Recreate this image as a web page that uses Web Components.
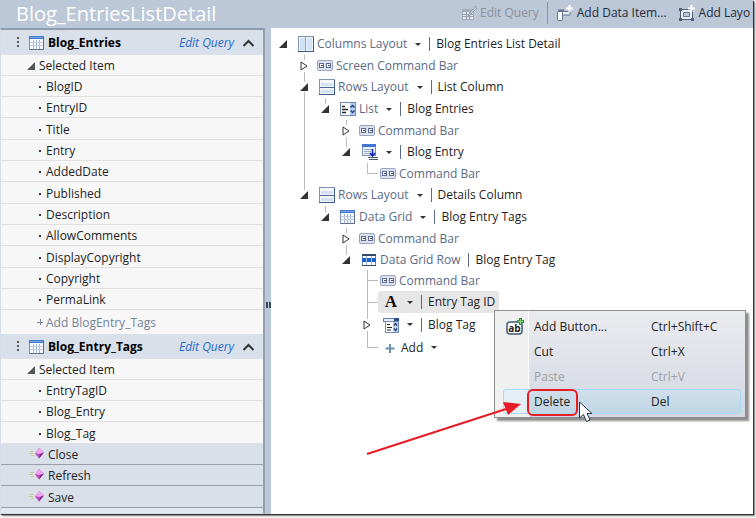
<!DOCTYPE html>
<html lang="en">
<head>
<meta charset="utf-8">
<title>Blog_EntriesListDetail</title>
<style>
  body {
    margin: 0;
    font: 12px/20px "Open Sans", "Noto Sans", sans-serif;
    color: #1e1e1e;
    background: white;
  }
</style>
</head>
<body>
<screen-designer heading="Blog_EntriesListDetail">
  <tool-button slot="tools" icon="editQuery" disabled>Edit Query</tool-button>
  <tool-button slot="tools" icon="addData" divided>Add Data Item...</tool-button>
  <tool-button slot="tools" icon="addLayout">Add Layo</tool-button>

  <data-panel slot="members">
    <query-group name="Blog_Entries" add="Add BlogEntry_Tags">
      <field-row>BlogID</field-row>
      <field-row>EntryID</field-row>
      <field-row>Title</field-row>
      <field-row>Entry</field-row>
      <field-row>AddedDate</field-row>
      <field-row>Published</field-row>
      <field-row>Description</field-row>
      <field-row>AllowComments</field-row>
      <field-row>DisplayCopyright</field-row>
      <field-row>Copyright</field-row>
      <field-row>PermaLink</field-row>
    </query-group>
    <query-group name="Blog_Entry_Tags">
      <field-row>EntryTagID</field-row>
      <field-row>Blog_Entry</field-row>
      <field-row>Blog_Tag</field-row>
    </query-group>
    <method-row>Close</method-row>
    <method-row>Refresh</method-row>
    <method-row>Save</method-row>
  </data-panel>

  <tree-item icon="columns" kind="Columns Layout" menu name="Blog Entries List Detail" state="open" root>
    <tree-item icon="commands" kind="Screen Command Bar" state="closed"></tree-item>
    <tree-item icon="rows" kind="Rows Layout" menu name="List Column" state="open">
      <tree-item icon="list" kind="List" menu name="Blog Entries" state="open">
        <tree-item icon="commands" kind="Command Bar" state="closed"></tree-item>
        <tree-item icon="summary" menu name="Blog Entry" state="open">
          <tree-item icon="commands" kind="Command Bar"></tree-item>
        </tree-item>
      </tree-item>
    </tree-item>
    <tree-item icon="rows" kind="Rows Layout" menu name="Details Column" state="open">
      <tree-item icon="grid" kind="Data Grid" menu name="Blog Entry Tags" state="open">
        <tree-item icon="commands" kind="Command Bar" state="closed"></tree-item>
        <tree-item icon="gridRow" kind="Data Grid Row" name="Blog Entry Tag" state="open">
          <tree-item icon="commands" kind="Command Bar"></tree-item>
          <tree-item icon="label" menu name="Entry Tag ID" selected></tree-item>
          <tree-item icon="picker" menu name="Blog Tag" state="closed"></tree-item>
          <tree-item icon="plus" kind="Add" menu add></tree-item>
        </tree-item>
      </tree-item>
    </tree-item>
  </tree-item>

  <context-menu slot="popup">
    <menu-entry icon="addButton" keys="Ctrl+Shift+C">Add Button...</menu-entry>
    <menu-entry keys="Ctrl+X">Cut</menu-entry>
    <menu-entry keys="Ctrl+V" disabled>Paste</menu-entry>
    <menu-entry keys="Del" active>Delete</menu-entry>
  </context-menu>
  <callout-arrow slot="popup"></callout-arrow>
</screen-designer>

<script>
const svg = (body, w = 16, h = 16) =>
  `<svg width="${w}" height="${h}" viewBox="0 0 ${w} ${h}" fill="none" aria-hidden="true">${body}</svg>`;

const tableIcon = svg(`
  <rect x=".5" y="1.5" width="14" height="13" fill="#f4f8fd" stroke="#8295b5"/>
  <path d="M0 1h15v3H0z" fill="#3f76cf"/><path d="M1 2h13v1H1z" fill="#7da6e6"/>
  <path d="M4.500 5v9M7.500 5v9M10.500 5v9" stroke="#a3b7d6"/>
  <path d="M1 7.500h13M1 10.500h13" stroke="#c0cee4"/>
  <path d="M14.500 4v10.500H1" stroke="#5d6f8f"/>`);

const icons = {
  table: tableIcon,
  grid: tableIcon,
  columns: svg(`
    <rect x=".5" y=".5" width="15" height="15" fill="#eef4fb" stroke="#7e93b5"/>
    <path d="M2 2h5v12H2zM9 2h5v12H9z" fill="#d3e3f5"/>
    <path d="M7.500 1v14" stroke="#8fa3c2"/><path d="M15.500 1v14.500H0" stroke="#3f5b87"/>`),
  rows: svg(`
    <rect x=".5" y=".5" width="15" height="15" fill="#f3f7fc" stroke="#7e93b5"/>
    <path d="M2 4h12v3H2zM2 11h12v3H2z" fill="#d3e3f5"/>
    <path d="M1 8.500h14" stroke="#4d6a97"/><path d="M15.500 1v14.500H0" stroke="#3f5b87"/>`),
  commands: svg(`
    <rect x=".5" y="2.500" width="15" height="10" rx="1.500" fill="#dde2f0" stroke="#9aa3bf"/>
    <rect x="2.500" y="5.500" width="4" height="4" fill="#fff" stroke="#5c6992"/>
    <rect x="9.500" y="5.500" width="4" height="4" fill="#fff" stroke="#5c6992"/>
    <path d="M4 7.500h2M11 7.500h2" stroke="#38456f"/>`),
  list: svg(`
    <rect x=".5" y="1.500" width="15" height="13" fill="#fff" stroke="#7189b8"/>
    <path d="M10 2h5v12h-5z" fill="#b5cdf2"/>
    <path d="M2 5.500h3M2 8.500h6M2 11.500h4" stroke="#222" stroke-width="1.500"/>
    <path d="M10.500 6.500l2-2 2 2M10.500 9.500l2 2 2-2" stroke="#24417a" stroke-width="1.500"/>`),
  summary: svg(`
    <rect x=".5" y=".5" width="13" height="11" fill="#e9f0fa" stroke="#7d92b8"/>
    <path d="M0 0h14v3H0z" fill="#3f76cf"/>
    <path d="M2 5.500h9M2 7.500h7M2 9.500h6" stroke="#9aaccc"/>
    <path d="M10.500 5v6M8 9l2.500 3L13 9" stroke="#1426b4" stroke-width="1.500"/>
    <path d="M6 13.500h10M7 15.500h9" stroke="#4d5a70"/>`),
  gridRow: svg(`
    <rect x="1.500" y="2.500" width="13" height="11" fill="#fff" stroke="#6e86b0"/>
    <path d="M1 2h14v2H1z" fill="#33496f"/>
    <path d="M1 6h14v4H1z" fill="#1f5fd0"/>
    <path d="M5.500 4v10M10.500 4v10" stroke="#9fb8e2"/>
    <path d="M1 13.500h14" stroke="#33496f"/>`),
  label: `<b id="glyph">A</b>`,
  picker: svg(`
    <rect x=".5" y="1.500" width="15" height="3" fill="#e5eefa" stroke="#5c7db5"/>
    <path d="M11 1h5v4h-5z" fill="#2b5288"/>
    <rect x="2.500" y="4.500" width="13" height="11" fill="#fff" stroke="#7189b8"/>
    <path d="M10 5h5v10h-5z" fill="#b5cdf2"/>
    <path d="M4 7.500h3M4 10.500h5M4 13h4" stroke="#222" stroke-width="1.200"/>
    <path d="M11 8.500l1.500-2 1.500 2M11 11.500l1.500 2 1.500-2" stroke="#24417a" stroke-width="1.300"/>`),
  plus: svg(`<path d="M6 4v9M1.500 8.500h9" stroke="#6d8fae" stroke-width="2"/>`),
  editQuery: svg(`
    <path d="M1 4h12v11H1z" fill="#a6adba"/>
    <path d="M2 7h10v7H2z" fill="#dfe4ec"/>
    <path d="M2 9.500h10M2 11.500h10M5.500 7v7M8.500 7v7" stroke="#9aa3b2"/>
    <path d="M15 1L8 9l-1 2 2-1 7-7z" fill="#c9d0dc" stroke="#949cab"/>`),
  addData: svg(`
    <path d="M6 7.500h8V11H7" fill="#e8eef6" stroke="#64748c"/>
    <rect x="1.500" y="7.500" width="5" height="9" rx="1" fill="#f8fafd" stroke="#64748c"/>
    <path d="M2 6.500h6" stroke="#64748c" stroke-width="2"/>
    <path d="M13.500 1v7M10 4.500h7" stroke="#fff" stroke-width="2"/>`, 18, 18),
  addLayout: svg(`
    <rect x="2.500" y="5.500" width="12" height="10" fill="#e8eef6" stroke="#4e5f7c"/>
    <path d="M5.500 8.500h6v4h-6z" fill="#b9c8dc" stroke="#64748c"/>
    <path d="M1 4h3v3H1zM13 14h3v3h-3zM1 14h3v3H1z" fill="#4e5f7c"/>
    <path d="M13.500 1v7M10 4.500h7" stroke="#fff" stroke-width="2"/>`, 18, 18),
  addButton: svg(`
    <rect x="1" y="4" width="15" height="12" rx="3" fill="#fff" stroke="#3c5878" stroke-width="1.500"/>
    <path d="M14.500 0v7M11 3.500h7" stroke="#3d9140" stroke-width="3"/>
    <path d="M14.500 1v5M12 3.500h5" stroke="#8bd07c"/>`, 18, 18),
  method: svg(`
    <path d="M1 4.500h4M0 6.500h4M2 8.500h3" stroke="#cfc98a"/>
    <path d="M10 1l5 4.500-5 6-4-5z" fill="#c04fc4"/>
    <path d="M10 1l5 4.500-4 1.500-5-1z" fill="#efa5f0"/>
    <path d="M11 7l4-1.500-5 6z" fill="#7d2a86"/>`),
};

class BaseElement extends HTMLElement {
  constructor() {
    super();
    this.attachShadow({ mode: "open" });
  }

  connectedCallback() {
    this.shadowRoot.innerHTML = `
      <style>
        * { box-sizing: border-box; }
        svg { display: block; flex: none; }
        button {
          font: inherit;
          color: inherit;
          background: none;
          border: 0;
          padding: 0;
          margin: 0;
          text-align: left;
        }
        :host { display: block; }
      </style>
      ${this.render()}
    `;
  }

  attr(name) {
    return this.getAttribute(name) || "";
  }
}

class ScreenDesigner extends BaseElement {
  render() {
    return `
      <style>
        :host {
          min-height: 100vh;
          padding: 0 3px 4px 0;
          box-sizing: border-box;
          display: grid;
          position: relative;
          overflow: hidden;
        }
        #frame {
          display: grid;
          grid-template: 28px 1fr / 265px 6px minmax(0, 1fr);
          background: #bcc7d8;
          box-shadow: 1px 1px 1px #333, 2px 2px 2px #888;
          min-width: 0;
        }
        header {
          grid-column: 1 / -1;
          display: flex;
          align-items: center;
          justify-content: space-between;
          overflow: hidden;
        }
        h1 {
          margin: 0 0 0 16px;
          font-size: 20px;
          line-height: 28px;
          font-weight: 400;
          color: white;
        }
        nav {
          display: flex;
          width: 292px;
          height: 22px;
          margin-bottom: 2px;
        }
        #splitter {
          display: flex;
          align-items: center;
          justify-content: center;
          gap: 1px;
          padding-top: 68px;
        }
        #splitter i {
          width: 2px;
          height: 6px;
          background: #3d4654;
        }
        main {
          background: white;
          padding: 5px 0 0 8px;
          min-width: 0;
        }
      </style>
      <div id="frame">
        <header>
          <h1>${this.attr("heading")}</h1>
          <nav><slot name="tools"></slot></nav>
        </header>
        <slot name="members"></slot>
        <div id="splitter"><i></i><i></i></div>
        <main><slot></slot></main>
      </div>
      <slot name="popup"></slot>
    `;
  }
}

class ToolButton extends BaseElement {
  render() {
    return `
      <style>
        :host {
          display: flex;
          flex: none;
          color: #1e2b3d;
        }
        :host([disabled]) { color: #8a919d; }
        :host([divided]) {
          border-left: 1px solid #8694aa;
          margin-left: 8px;
          padding-left: 8px;
        }
        :host([icon="addLayout"]) { margin-left: 11px; }
        button {
          display: flex;
          align-items: center;
          gap: 3px;
          white-space: nowrap;
        }
      </style>
      <button ${this.hasAttribute("disabled") ? "disabled" : ""}>
        ${icons[this.attr("icon")]}<slot></slot>
      </button>
    `;
  }
}

class DataPanel extends BaseElement {
  render() {
    return `
      <style>
        :host {
          background: #e2e8f1;
          border: 1px solid #d5ddea;
          border-top: 2px solid #8e9bb0;
          border-right: 2px solid #929fb3;
        }
      </style>
      <slot></slot>
    `;
  }
}

class QueryGroup extends BaseElement {
  render() {
    const add = this.attr("add");
    return `
      <style>
        header {
          display: flex;
          align-items: center;
          height: 25px;
          padding: 0 8px 0 16px;
          background: #d9e0ea;
        }
        #grip {
          width: 2px;
          height: 11px;
          margin-right: 10px;
          background: repeating-linear-gradient(#555 0 2px, transparent 2px 4px);
        }
        h2 {
          margin: 0 auto 0 3px;
          font-size: 12px;
          line-height: 20px;
          color: black;
        }
        a {
          color: #2a6ad0;
          font-style: italic;
          text-decoration: none;
          margin-right: 8px;
        }
        .row {
          display: flex;
          align-items: center;
          width: 100%;
          padding-top: 2px;
          background: #f7f7f7;
          border-bottom: 1px solid #e0e0e0;
        }
        #selected {
          height: 21px;
          padding-left: 26px;
          gap: 4px;
        }
        #add {
          height: 24px;
          padding-left: 36px;
          gap: 3px;
          color: #76839a;
          border: 0;
        }
      </style>
      <header>
        <span id="grip"></span>
        ${icons.table}
        <h2>${this.attr("name")}</h2>
        <a href="#">Edit Query</a>
        <button aria-label="Collapse">
          ${svg(`<path d="M1.500 8L6.500 3l5 5" stroke="#333" stroke-width="2"/>`, 13, 10)}
        </button>
      </header>
      <div class="row" id="selected">
        ${svg(`<path d="M8 0v8H0z" fill="#555"/>`, 8, 8)}Selected Item
      </div>
      <slot></slot>
      ${add ? `<button class="row" id="add">
        ${svg(`<path d="M3.500 0v6M0 3.500h6" stroke="#76839a"/>`, 6, 8)}${add}
      </button>` : ""}
    `;
  }
}

class FieldRow extends BaseElement {
  render() {
    return `
      <style>
        :host {
          display: flex;
          align-items: center;
          gap: 5px;
          height: 21px;
          box-sizing: border-box;
          padding: 2px 0 0 38px;
          background: #f7f7f7;
          border-bottom: 1px solid #e0e0e0;
        }
        :host(:nth-child(3n)) { height: 22px; }
        i {
          width: 2px;
          height: 2px;
          background: #333;
        }
      </style>
      <i></i><slot></slot>
    `;
  }
}

class MethodRow extends BaseElement {
  render() {
    return `
      <style>
        button {
          display: flex;
          align-items: center;
          gap: 3px;
          width: 100%;
          height: 21px;
          padding: 2px 0 0 28px;
          background: #d9e0ea;
          border-bottom: 1px solid #999fa8;
        }
        :host(:last-child) button { height: 22px; }
      </style>
      <button>${icons.method}<slot></slot></button>
    `;
  }
}

class TreeItem extends BaseElement {
  expander() {
    const state = this.attr("state");
    if (state === "open") {
      return `<button aria-label="Collapse">${svg(`<path d="M8 1v8H0z" fill="#333"/>`, 9, 10)}</button>`;
    }
    if (state === "closed") {
      return `<button aria-label="Expand">${svg(`<path d="M1 2l6 4-6 4z" fill="#fff" stroke="#333"/>`, 9, 12)}</button>`;
    }
    return `<i></i>`;
  }

  render() {
    const kind = this.attr("kind");
    const name = this.attr("name");
    return `
      <style>
        /* the guide line runs on to the next sibling, or stops at the last one */
        :host {
          background: linear-gradient(#bbb, #bbb) 4px 0 / 1px 100% no-repeat;
        }
        :host(:last-child) { background-size: 1px 11px; }
        :host([root]) { background: none; }
        #row {
          display: flex;
          align-items: center;
          height: 22px;
          white-space: nowrap;
        }
        :host([icon="commands"]) #row,
        :host([icon="gridRow"]) #row { height: 21px; }
        :host([icon="picker"]) #row,
        :host([add]) #row { height: 23px; }
        #gutter {
          display: flex;
          flex: none;
          width: 15px;
        }
        #gutter button { background: white; }
        #gutter i {
          width: 11px;
          height: 1px;
          margin-left: 4px;
          background: #bbb;
        }
        #label {
          display: flex;
          align-items: center;
          height: 100%;
          padding: 0 4px;
          border-radius: 3px;
        }
        :host([icon="commands"]) #label { padding-left: 2px; }
        :host([icon="summary"]) #label,
        :host([icon="label"]) #label,
        :host([icon="picker"]) #label { padding-left: 5px; }
        :host([add]) #label { padding-left: 6px; }
        :host([selected]) #label { background: #e6e6e6; }
        #glyph {
          width: 16px;
          font: bold 17px/20px "Liberation Serif", serif;
          text-align: center;
          color: #111;
        }
        #kind {
          margin-left: 3px;
          color: #5b6b84;
        }
        :host([add]) #kind { color: #1e1e1e; margin-left: 1px; }
        #menu {
          margin-left: 8px;
        }
        #name {
          margin-left: 8px;
          display: flex;
          align-items: center;
          gap: 6px;
        }
        #name::before {
          content: "";
          width: 1px;
          height: 14px;
          background: #5b6b84;
        }
        #children { padding-left: 21px; }
      </style>
      <div id="row">
        <span id="gutter">${this.expander()}</span>
        <span id="label">
          ${icons[this.attr("icon")]}
          ${kind ? `<span id="kind">${kind}</span>` : ""}
          ${this.hasAttribute("menu") ? `<button id="menu" aria-label="Change type">
            ${svg(`<path d="M0 1h6L3 4z" fill="#333"/>`, 6, 5)}</button>` : ""}
          ${name ? `<span id="name">${name}</span>` : ""}
        </span>
      </div>
      <div id="children"><slot></slot></div>
    `;
  }
}

class ContextMenu extends BaseElement {
  render() {
    return `
      <style>
        :host {
          position: absolute;
          left: 494px;
          top: 310px;
          width: 252px;
          box-sizing: border-box;
          padding: 3px 4px 3px 8px;
          border: 1px solid #8f8f8f;
          background:
            linear-gradient(#fff, #fff) 33px 0 / 1px 100% no-repeat,
            linear-gradient(90deg, #f0f0f0 33px, transparent 33px),
            linear-gradient(#eaecef, #d3d7e2);
          box-shadow: 3px 3px 2px rgba(0, 0, 0, 0.45);
        }
      </style>
      <slot></slot>
    `;
  }
}

class MenuEntry extends BaseElement {
  render() {
    const icon = this.attr("icon");
    return `
      <style>
        button {
          display: grid;
          grid-template-columns: 28px 117px 1fr;
          align-items: center;
          width: 100%;
          height: 25px;
          padding-left: 2px;
          border: 1px solid transparent;
          border-radius: 3px;
          color: #1e1e1e;
        }
        :host([disabled]) button { color: #a0a0a0; }
        :host([active]) button {
          border-color: #a6dcf5;
          background: linear-gradient(90deg, #e4eef5 22px, transparent 26px), linear-gradient(#d0dfeb, #c0d6e6);
        }
        #icon { display: grid; align-items: center; }
        #icon > * { grid-area: 1 / 1; }
        b {
          font-size: 10px;
          line-height: 12px;
          width: 17px;
          padding-top: 2px;
          text-align: center;
        }
      </style>
      <button ${this.hasAttribute("disabled") ? "disabled" : ""}>
        <span id="icon">${icon ? icons[icon] + "<b>ab</b>" : ""}</span>
        <slot></slot>
        <span>${this.attr("keys")}</span>
      </button>
    `;
  }
}

class CalloutArrow extends BaseElement {
  render() {
    return `
      <style>
        :host {
          position: absolute;
          left: 360px;
          top: 380px;
          pointer-events: none;
        }
      </style>
      ${svg(`
        <rect x="168" y="10" width="49" height="25" rx="5" stroke="#e81c24" stroke-width="2"/>
        <path d="M7 74L146 29" stroke="#e81c24" stroke-width="2"/>
        <path d="M161 24l-18-2 5 13z" fill="#e81c24"/>
        <path d="M219.500 22v16l4-3.500 3 7 3.500-1.500-3-6.500h5z" fill="#fff" stroke="#2a3350"/>
      `, 240, 80)}
    `;
  }
}

customElements.define("tool-button", ToolButton);
customElements.define("data-panel", DataPanel);
customElements.define("query-group", QueryGroup);
customElements.define("field-row", FieldRow);
customElements.define("method-row", MethodRow);
customElements.define("tree-item", TreeItem);
customElements.define("menu-entry", MenuEntry);
customElements.define("context-menu", ContextMenu);
customElements.define("callout-arrow", CalloutArrow);
customElements.define("screen-designer", ScreenDesigner);
</script>
</body>
</html>
